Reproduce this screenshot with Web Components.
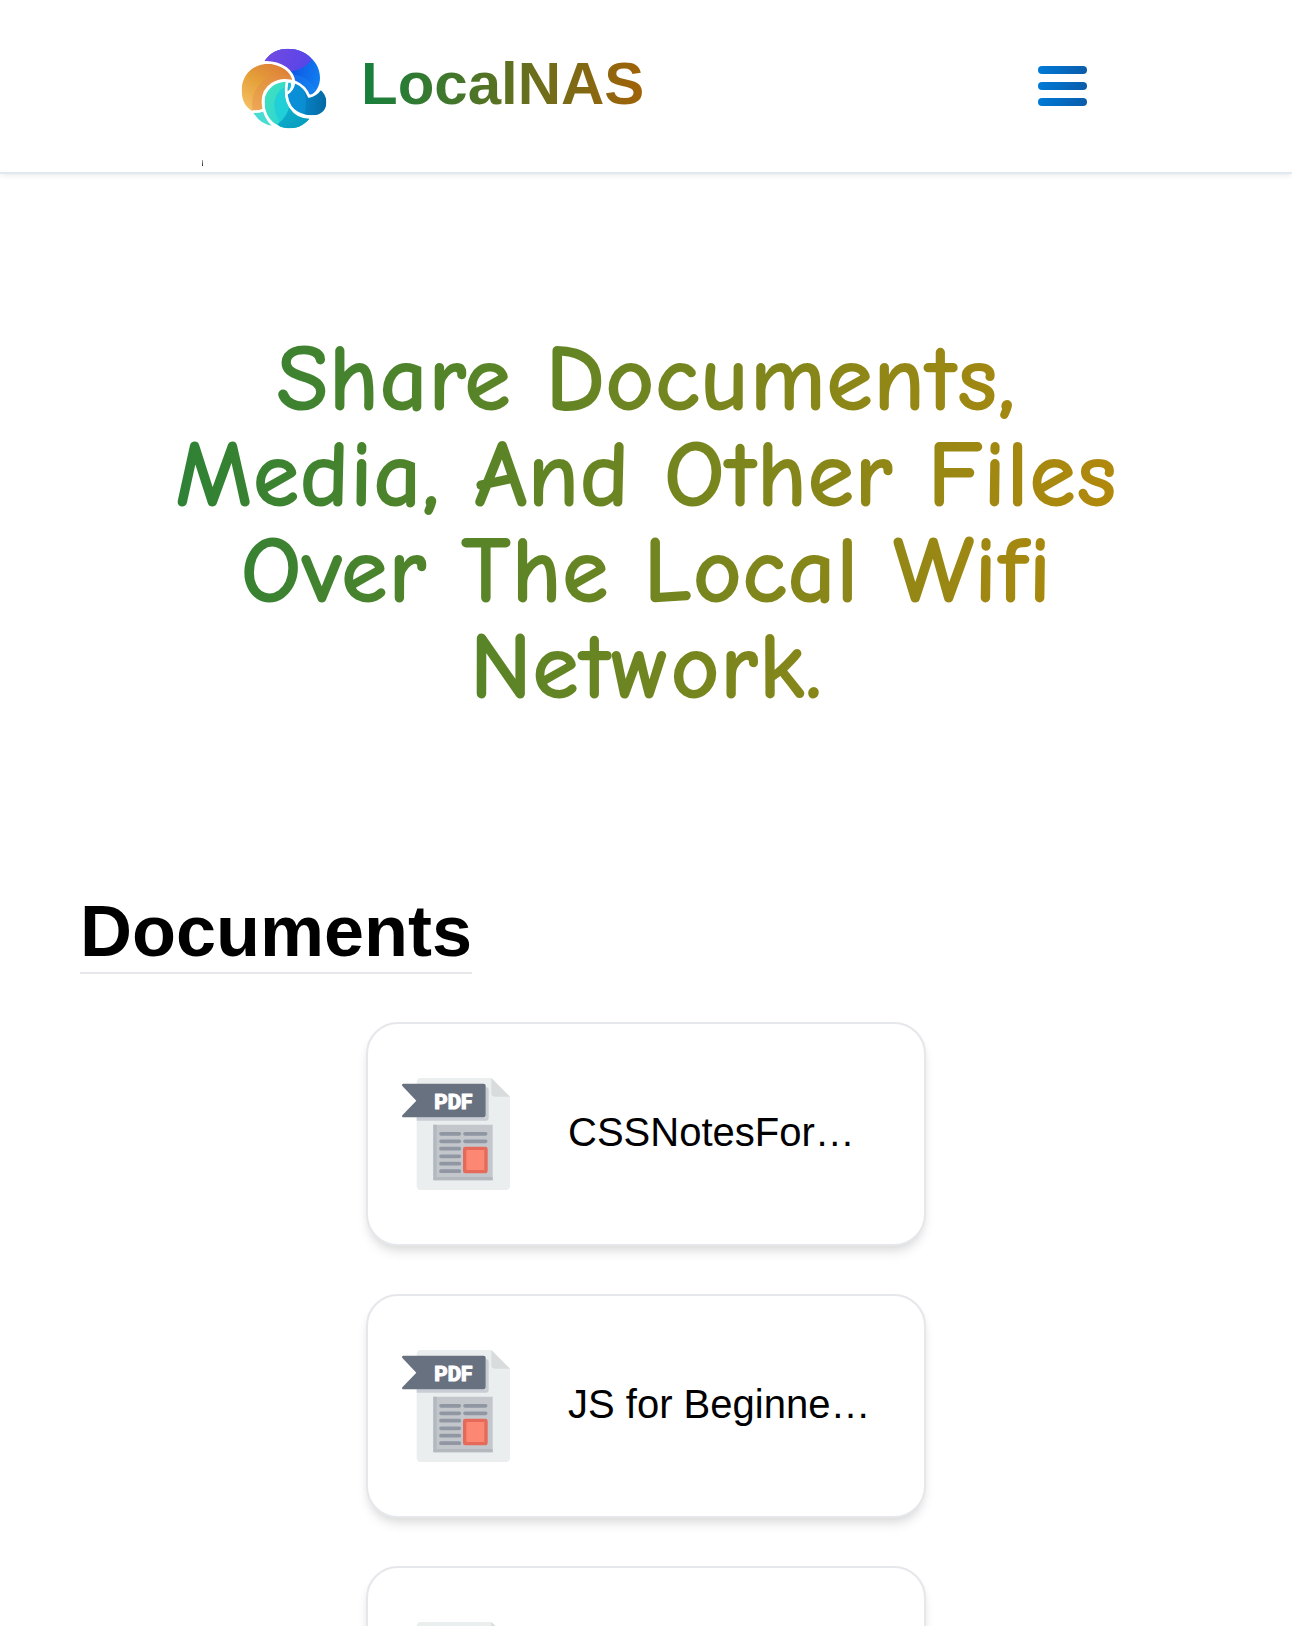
<!DOCTYPE html>
<html lang="en">
<head>
<meta charset="utf-8">
<title>LocalNAS</title>
<style>
html,body{margin:0;background:#fff;color:#000;font-family:"Liberation Sans",Arial,sans-serif}
body{height:1626px;overflow:hidden}
</style>
</head>
<body>
<nas-app></nas-app>
<script>
const define = (name, html) => customElements.define(name, class extends HTMLElement {
  constructor() {
    super();
    const t = document.createElement('template');
    t.innerHTML = html;
    this.attachShadow({ mode: 'open' }).appendChild(t.content.cloneNode(true));
  }
});

define('nas-logo', `
<style>:host{display:block;width:88px;height:84px}svg{display:block}</style>
<svg width="88" height="84" viewBox="150 47 264 252">
  <defs>
    <linearGradient id="p" x1="0" y1="0" x2="1" y2="0.35"><stop offset="0" stop-color="#7a4be0"/><stop offset="1" stop-color="#5a45e8"/></linearGradient>
    <linearGradient id="b" x1="0" y1="0" x2="1" y2="0.3"><stop offset="0" stop-color="#1a2cc8"/><stop offset=".5" stop-color="#1148e0"/><stop offset="1" stop-color="#0f86f2"/></linearGradient>
    <linearGradient id="o" x1="0.8" y1="0" x2="0.2" y2="1"><stop offset="0" stop-color="#dc7636"/><stop offset=".5" stop-color="#e5a03a"/><stop offset="1" stop-color="#f6c266"/></linearGradient>
    <linearGradient id="d" x1="0" y1="0" x2="1" y2="0"><stop offset="0" stop-color="#0b8fdc"/><stop offset=".5" stop-color="#0a8ed2"/><stop offset="1" stop-color="#045d98"/></linearGradient>
    <linearGradient id="t" x1="0" y1="0" x2="1" y2="0.6"><stop offset="0" stop-color="#45e3b8"/><stop offset="1" stop-color="#22cfe0"/></linearGradient>
    <linearGradient id="u" x1="0" y1="0" x2="1" y2="1"><stop offset="0" stop-color="#0fb6cf"/><stop offset="1" stop-color="#0590b8"/></linearGradient>
    <clipPath id="cp"><path d="M223 93C240 67 265 55 293 55C347 55 390 95 390 142C390 166 378 187 358 197C351 183 337 165 315 156C308 121 272 93 223 93Z"/></clipPath>
    <clipPath id="co"><path d="M186 242C166 230 155 209 155 180C155 134 189 100 238 100C274 100 304 124 308 151C262 143 219 172 219 213Q219 225 222 235Q207 244 186 242Z"/></clipPath>
    <clipPath id="ct"><path d="M290 154C251 154 223 182 223 218C223 261 258 294 301 294C324 294 345 282 359 264C315 260 286 231 285 188Q285 170 290 154Z"/></clipPath>
    <clipPath id="cd"><path d="M315 158C334 163 350 180 356 199Q376 195 389 177Q409 193 409 216C409 239 393 254 370 255C326 255 292 228 291 193Q309 180 313 158Z"/></clipPath>
  </defs>
  <g clip-path="url(#cp)"><rect x="150" y="48" width="264" height="252" fill="url(#b)"/><path d="M210 40H350L364 90C345 112 325 121 297 123L210 110Z" fill="url(#p)"/><circle cx="300" cy="220" r="88" fill="#2595f5" opacity=".28"/></g>
  <g clip-path="url(#co)"><rect x="150" y="90" width="170" height="160" fill="url(#o)"/><circle cx="275" cy="221" r="89" fill="#e58a4c" opacity=".42"/></g>
  <path d="M190 247Q207 249 223 243Q231 265 249 286Q212 284 190 247Z" fill="#4adbd2"/>
  <g clip-path="url(#ct)"><rect x="215" y="145" width="155" height="155" fill="url(#t)"/><path d="M286 170C248 188 246 234 264 264L280 300L380 290V250L305 226Q286 205 286 170Z" fill="#20cfd8"/><path d="M300 220Q293 259 263 281L280 310H380V255Z" fill="url(#u)"/></g>
  <g clip-path="url(#cd)"><rect x="280" y="150" width="135" height="110" fill="url(#d)"/><path d="M335 165Q358 210 340 262H420V150Z" fill="#0470ad" opacity=".45"/></g>
  <path d="M293 157L302 157Q307 172 292 187Q288 173 293 157Z" fill="#16b6d8"/>
  <g fill="none" stroke="#fff" stroke-width="8">
    <path d="M221 96C276 94 311 124 312 158Q307 181 290 190"/>
    <path d="M317 156C262 136 219 169 219 213C219 246 234 273 251 287"/>
    <path d="M291 155C280 213 307 262 361 261"/>
    <path d="M315 155Q346 168 357 198Q377 195 391 175"/>
    <path d="M187 244Q207 245 222 238"/>
  </g>
</svg>`);

define('nas-menu-button', `
<style>:host{display:flex;flex-direction:column;gap:8px;width:49px}
i{height:8px;border-radius:4px;background:linear-gradient(120deg,#0078d4 10%,#0b5cab 95%)}</style>
<i></i><i></i><i></i>`);

define('nas-header', `
<style>
:host{display:flex;box-sizing:border-box;height:174px;border-bottom:2px solid #e2e8f0;box-shadow:0 2px 6px rgba(0,0,0,.06),0 2px 4px -2px rgba(0,0,0,.04);background:#fff;padding:46px 205.500px 0 202px;justify-content:space-between;align-items:flex-start}
.left{display:flex;align-items:flex-start}
.tick{width:1px;height:6px;margin-top:114px;background:linear-gradient(#aaa,#222)}
nas-logo{margin-left:37px}
b{display:block;margin:2px 0 0 33px;font-size:60px;line-height:72px;background:linear-gradient(90deg,#15803d,#a16207);-webkit-background-clip:text;background-clip:text;color:transparent}
nas-menu-button{margin-top:20px}
</style>
<div class="left"><span class="tick"></span><nas-logo></nas-logo><b>LocalNAS</b></div>
<nas-menu-button></nas-menu-button>`);

define('nas-hero', `
<style>
:host{display:block;padding-top:157px}
h1{margin:0;font-family:"Comic Neue","Comic Relief","Comic Sans MS",cursive;font-weight:700;font-size:96px;line-height:96px;text-align:center;background:linear-gradient(90deg,#15803d,#ca8a04);-webkit-background-clip:text;background-clip:text;color:transparent}
span{display:block;white-space:nowrap}
</style>
<h1><span>Share Documents,</span><span>Media, And Other Files</span><span>Over The Local Wifi</span><span>Network.</span></h1>`);

define('pdf-icon', `
<style>:host{display:block;width:112px;height:116px;flex:none}svg{display:block}</style>
<svg width="112" height="116" viewBox="15 18 336 348">
  <path d="M77 24H289L345 80V348Q345 360 333 360H77Q65 360 65 348V36Q65 24 77 24Z" fill="#ebeeef"/>
  <path d="M289 24L345 80H299Q289 80 289 70Z" fill="#d9dcdd"/>
  <path d="M65 142H272V52H275Q281 52 281 58V144Q281 152 273 152H65Z" fill="#c9ced5"/>
  <path d="M26 41H266Q272 41 272 47V136Q272 142 266 142H26Q19 142 22 136L64 92L22 48Q19 41 26 41Z" fill="#68717f"/>
  <text x="118" y="117" font-family="Roboto" font-weight="800" font-size="60" fill="#fff" stroke="#fff" stroke-width="3" stroke-linejoin="round" textLength="114" lengthAdjust="spacingAndGlyphs">PDF</text>
  <path d="M115 164H293V331H115Z" fill="#c3c7cc"/>
  <path d="M115 164H125V321H293V331H115Z" fill="#b3b9be"/>
  <g stroke="#9097a3" stroke-width="11" stroke-linecap="round">
    <path d="M138 191.500H193M138 214H193M138 236H193M138 259H193M138 281H193M138 303.500H193M210 191.500H272M210 214H272"/>
  </g>
  <rect x="209" y="235" width="64" height="70" rx="2" fill="#fc8873" stroke="#e56a59" stroke-width="10"/>
</svg>`);

define('file-card', `
<style>
:host{display:flex;box-sizing:border-box;width:560px;height:224px;flex:none;align-items:center;gap:56px;padding:0 32px;border:2px solid #e5e7eb;border-radius:32px;background:#fff;box-shadow:0 8px 12px -2px rgba(0,0,0,.1),0 4px 8px -2px rgba(0,0,0,.06)}
p{margin:0 0 4px;font-size:40px;line-height:56px;white-space:nowrap}
</style>
<pdf-icon></pdf-icon><p><slot></slot></p>`);

define('file-section', `
<style>
:host{display:flex;flex-direction:column;align-items:flex-start;padding:0 80px}
h2{margin:0;padding-bottom:1px;font-size:72px;line-height:80px;font-weight:700;border-bottom:2px solid #e5e7eb}
.list{display:flex;flex-direction:column;gap:48px;align-self:stretch;align-items:center;margin-top:48px}
</style>
<h2><slot name="title"></slot></h2><div class="list"><slot></slot></div>`);

define('nas-app', `
<style>:host{display:block}nas-header{position:relative}file-section{margin-top:176px}</style>
<nas-header></nas-header>
<nas-hero></nas-hero>
<file-section><span slot="title">Documents</span>
<file-card>CSSNotesFor…</file-card><file-card>JS for Beginne…</file-card><file-card></file-card></file-section>`);
</script>
</body>
</html>
